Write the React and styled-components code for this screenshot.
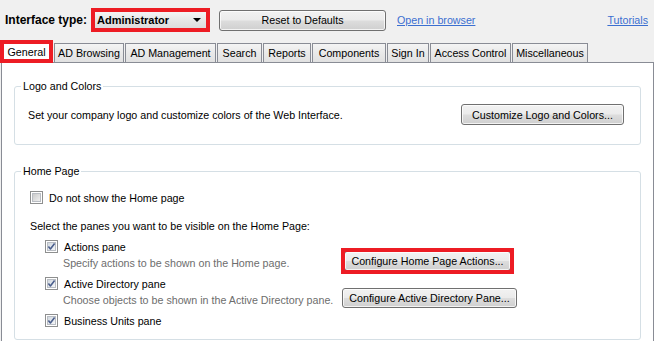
import React, { useId } from 'react';
import styled, { createGlobalStyle } from 'styled-components';

const GlobalStyle = createGlobalStyle`
  html, body {
    margin: 0;
    padding: 0;
  }
  body {
    background: #f0f0f0;
    font-family: "Liberation Sans", Arial, sans-serif;
    font-size: 10.7px;
    color: #000;
  }
`;

const RED = '#ed1c24';

const Window = styled.div`
  width: 654px;
  height: 341px;
  overflow: hidden;
  background: #f0f0f0;
`;

// Top toolbar
const TopBar = styled.div`
  display: flex;
  align-items: center;
  height: 40px;
  padding: 0 6px 0 5px;
`;

const FieldLabel = styled.span`
  width: 86px;
  font-size: 12px;
  font-weight: bold;
  white-space: nowrap;
`;

const Combo = styled.div`
  box-sizing: border-box;
  display: flex;
  align-items: center;
  justify-content: space-between;
  width: 119px;
  height: 24px;
  padding: 0 5px 0 2px;
  border: 4px solid ${(p) => (p.$highlight ? RED : '#707070')};
  background: linear-gradient(#f4f4f4, #e6e6e6 55%, #dcdcdc);
  font-size: 11px;
  font-weight: bold;
`;

const Arrow = styled.span`
  width: 0;
  height: 0;
  border-left: 4px solid transparent;
  border-right: 4px solid transparent;
  border-top: 4px solid #000;
`;

const Button = styled.button`
  box-sizing: border-box;
  position: relative;
  width: ${(p) => p.$w}px;
  height: ${(p) => p.$h || 21}px;
  margin: ${(p) => p.$m || 0};
  padding: 0;
  border: 1px solid #707070;
  border-radius: 3px;
  background: linear-gradient(#f2f2f2 0%, #ebebeb 48%, #dddddd 52%, #cfcfcf 100%);
  box-shadow: inset 0 0 0 1px rgba(255, 255, 255, 0.75);
  font: inherit;
  color: #000;
  white-space: nowrap;

  /* red annotation frame drawn over the button edge */
  &::after {
    content: '';
    display: ${(p) => (p.$highlight ? 'block' : 'none')};
    position: absolute;
    inset: -4px;
    border: 4px solid ${RED};
  }
`;

const Link = styled.a`
  margin-left: ${(p) => p.$ml || 0};
  color: #3b6fd0;
  text-decoration: underline;
  white-space: nowrap;
  cursor: pointer;
`;

// Tabs
const TabStrip = styled.div`
  display: flex;
  align-items: flex-end;
  gap: 1px;
  height: 22px;
`;

const Tab = styled.div`
  box-sizing: border-box;
  position: relative;
  z-index: ${(p) => (p.$active ? 1 : 0)};
  display: flex;
  align-items: center;
  justify-content: center;
  width: ${(p) => p.$w}px;
  height: ${(p) => (p.$active ? 23 : 19)}px;
  margin-bottom: ${(p) => (p.$active ? -1 : 0)}px;
  border: 1px solid #898c95;
  border-bottom: none;
  ${(p) => p.$highlight && `border: 4px solid ${RED};`}
  background: ${(p) =>
    p.$active ? '#fff' : 'linear-gradient(#f4f4f4, #e9e9e9 50%, #e1e1e1)'};
  white-space: nowrap;
`;

const Panel = styled.div`
  height: 290px;
  margin-left: 1px;
  padding: 0 12px;
  border: 1px solid #898c95;
  border-bottom: none;
  background: #fff;
`;

// Group boxes
const Group = styled.fieldset`
  min-width: 0;
  margin: ${(p) => p.$mt}px 0 0;
  padding: 0;
  border: 1px solid #d5dfe5;
  border-radius: 3px;
`;

const Legend = styled.legend`
  margin-left: 6px;
  padding: 0 2px;
  line-height: 13px;
`;

const LogoContent = styled.div`
  display: flex;
  align-items: center;
  justify-content: space-between;
  padding: 11px 16px 19px 13px;
`;

const HomeContent = styled.div`
  display: flex;
  flex-direction: column;
  padding: 13px 16px 12px 15px;
`;

const Line = styled.div`
  display: flex;
  align-items: center;
  height: 13px;
  margin-top: ${(p) => p.$mt || 0}px;
  padding-left: ${(p) => p.$indent || 0}px;
  gap: 6px;
  white-space: nowrap;
`;

const DescRow = styled.div`
  display: flex;
  align-items: center;
  height: 20px;
  padding-left: 33px;
`;

const DescText = styled.span`
  width: 279px;
  color: #6d6d6d;
  white-space: nowrap;
`;

// Windows 7 style checkbox
const CheckBox = ({ checked }) => {
  const id = useId();
  return (
    <svg width="13" height="13" viewBox="0 0 13 13" style={{ flex: 'none' }}>
      <defs>
        <linearGradient id={id} x1="0" y1="0" x2="1" y2="1">
          <stop offset="0" stopColor={checked ? '#cfd6de' : '#c9c9c9'} />
          <stop offset="1" stopColor={checked ? '#f7f8f9' : '#f2f2f2'} />
        </linearGradient>
      </defs>
      <rect x="0.5" y="0.5" width="12" height="12" fill="#fff" stroke="#8e8f8f" />
      <rect x="2.5" y="2.5" width="8" height="8" fill={`url(#${id})`} stroke="#b9bdc3" />
      {checked && (
        <path
          d="M3.4 6.6 L5.4 8.9 L9.6 3.6"
          fill="none"
          stroke="#4a5e8c"
          strokeWidth="1.6"
          strokeLinejoin="round"
        />
      )}
    </svg>
  );
};

const tabs = [
  { label: 'General', w: 53, active: true },
  { label: 'AD Browsing', w: 70 },
  { label: 'AD Management', w: 91 },
  { label: 'Search', w: 45 },
  { label: 'Reports', w: 48 },
  { label: 'Components', w: 74 },
  { label: 'Sign In', w: 42 },
  { label: 'Access Control', w: 81 },
  { label: 'Miscellaneous', w: 76 },
];

const App = () => {
  return (
    <Window>
      <GlobalStyle />
      <TopBar>
        <FieldLabel>Interface type:</FieldLabel>
        <Combo $highlight>
          <span>Administrator</span>
          <Arrow />
        </Combo>
        <Button $w={167} $m="0 0 0 9px">
          Reset to Defaults
        </Button>
        <Link $ml="11px">Open in browser</Link>
        <Link $ml="auto">Tutorials</Link>
      </TopBar>

      <TabStrip>
        {tabs.map((t) => (
          <Tab key={t.label} $w={t.w} $active={t.active} $highlight={t.active}>
            {t.label}
          </Tab>
        ))}
      </TabStrip>

      <Panel>
        <Group $mt={17}>
          <Legend>Logo and Colors</Legend>
          <LogoContent>
            <span>Set your company logo and customize colors of the Web Interface.</span>
            <Button $w={163}>Customize Logo and Colors...</Button>
          </LogoContent>
        </Group>

        <Group $mt={20}>
          <Legend>Home Page</Legend>
          <HomeContent>
            <Line>
              <CheckBox />
              <span>Do not show the Home page</span>
            </Line>
            <Line $mt={15}>Select the panes you want to be visible on the Home Page:</Line>
            <Line $mt={8} $indent={15}>
              <CheckBox checked />
              <span>Actions pane</span>
            </Line>
            <DescRow>
              <DescText>Specify actions to be shown on the Home page.</DescText>
              <Button $w={167} $h={20} $m="-4px 0 0 2px" $highlight>
                Configure Home Page Actions...
              </Button>
            </DescRow>
            <Line $mt={4} $indent={15}>
              <CheckBox checked />
              <span>Active Directory pane</span>
            </Line>
            <DescRow>
              <DescText>Choose objects to be shown in the Active Directory pane.</DescText>
              <Button $w={175} $h={20} $m="-4px 0 0 0">
                Configure Active Directory Pane...
              </Button>
            </DescRow>
            <Line $mt={4} $indent={15}>
              <CheckBox checked />
              <span>Business Units pane</span>
            </Line>
          </HomeContent>
        </Group>
      </Panel>
    </Window>
  );
};

export default App;
